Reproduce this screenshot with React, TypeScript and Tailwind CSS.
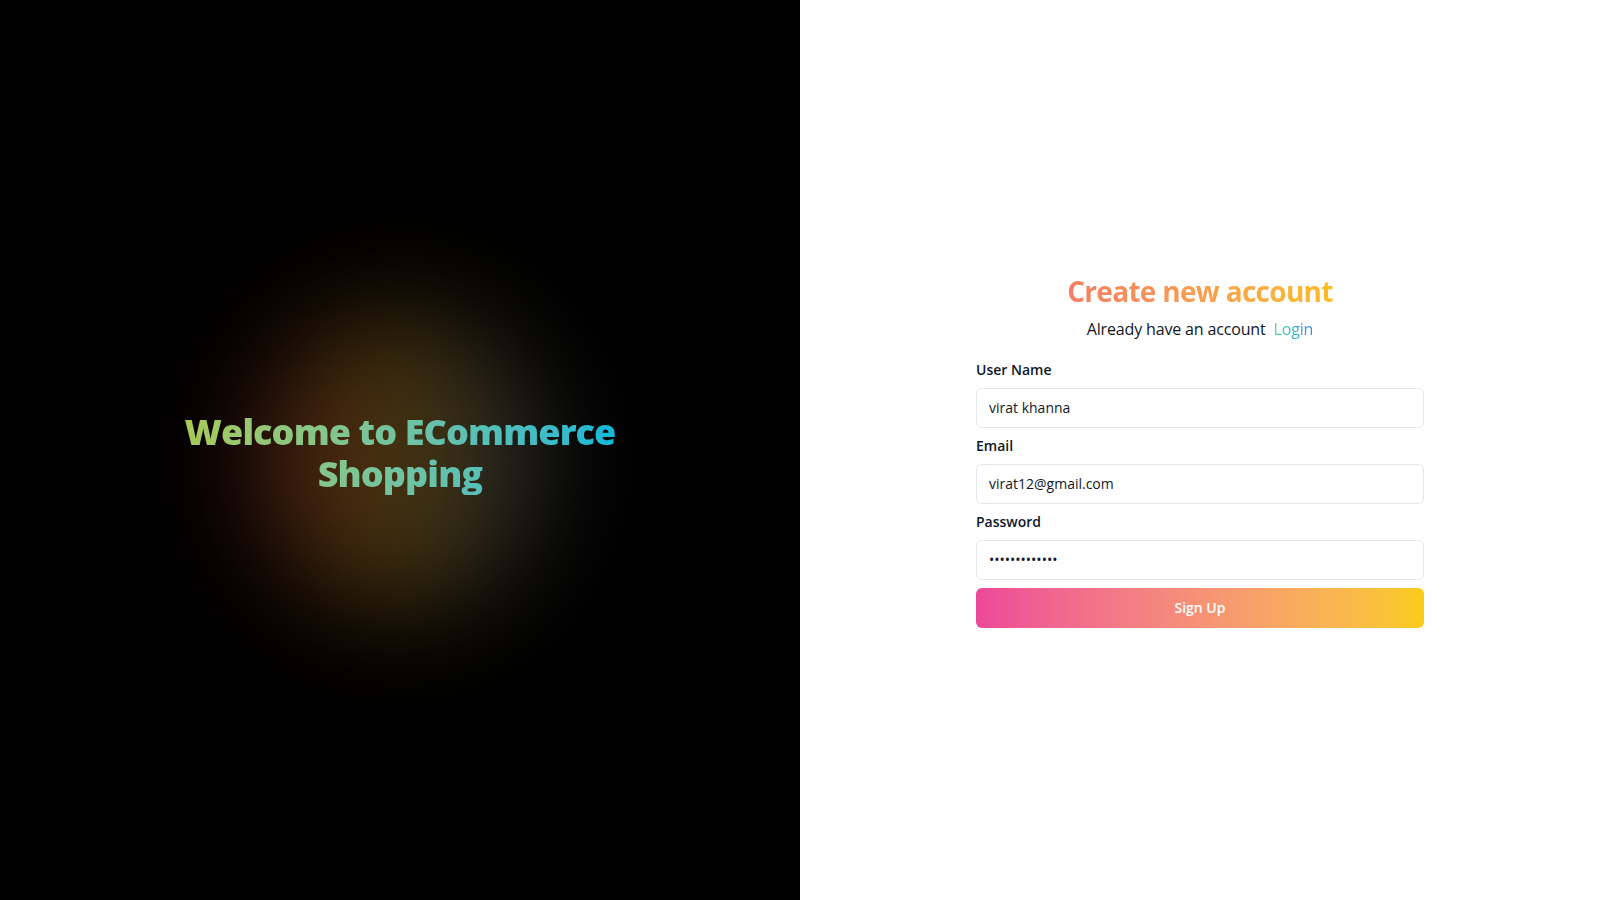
import { useState } from 'react';

const SignUpPage = () => {
  const [name, setName] = useState('virat khanna');
  const [email, setEmail] = useState('virat12@gmail.com');
  const [password, setPassword] = useState('virat12345678');

  return (
    <div className="flex h-screen w-full font-['Open_Sans',sans-serif]">
      {/* Left side */}
      <div className="relative flex w-1/2 items-center justify-center overflow-hidden bg-black">
        <div className="absolute left-1/2 top-1/2 h-[300px] w-[300px] -translate-x-1/2 -translate-y-[46%] rounded-full bg-gradient-to-r from-[#ef4444] via-[#eab308] to-[#64748b] opacity-30 blur-[55px]" />
        <h1 className="relative mt-[6px] w-fit bg-gradient-to-r from-[#a6c957] to-[#0db8d8] bg-clip-text text-center text-4xl leading-[42px] font-extrabold tracking-tight text-transparent">
          Welcome to ECommerce
          <br />
          Shopping
        </h1>
      </div>

      {/* Right side */}
      <div className="flex w-1/2 flex-col items-center justify-center bg-white">
        <div className="w-full max-w-md">
          <div className="text-center">
            <h2 className="inline-block bg-gradient-to-r from-[#f57d64] to-[#fbbd22] bg-clip-text text-[28px] leading-9 font-bold tracking-tight text-transparent">
              Create new account
            </h2>
            <p className="mt-2 text-base tracking-[-0.01em] text-gray-900">
              Already have an account
              <a href="#" className="ml-2 inline-block bg-gradient-to-r from-[#4ade80] to-[#3b82f6] bg-clip-text text-transparent">
                Login
              </a>
            </p>
          </div>

          <form className="mt-[19px] flex flex-col gap-2" onSubmit={(e) => e.preventDefault()}>
            <label className="text-sm leading-5 font-semibold text-slate-900">User Name</label>
            <input
              type="text"
              value={name}
              onChange={(e) => setName(e.target.value)}
              className="h-10 w-full rounded-md border border-slate-200 bg-white px-3 text-sm text-gray-900 outline-none"
            />
            <label className="text-sm leading-5 font-semibold text-slate-900">Email</label>
            <input
              type="email"
              value={email}
              onChange={(e) => setEmail(e.target.value)}
              className="h-10 w-full rounded-md border border-slate-200 bg-white px-3 text-sm text-gray-900 outline-none"
            />
            <label className="text-sm leading-5 font-semibold text-slate-900">Password</label>
            <input
              type="password"
              value={password}
              onChange={(e) => setPassword(e.target.value)}
              className="h-10 w-full rounded-md border border-slate-200 bg-white px-3 text-sm text-gray-900 outline-none"
            />
            <button
              type="submit"
              className="h-10 w-full rounded-md bg-gradient-to-r from-[#ec4899] to-[#facc15] text-sm font-semibold text-white"
            >
              Sign Up
            </button>
          </form>
        </div>
      </div>
    </div>
  );
};

export default function App() {
  return <SignUpPage />;
}
